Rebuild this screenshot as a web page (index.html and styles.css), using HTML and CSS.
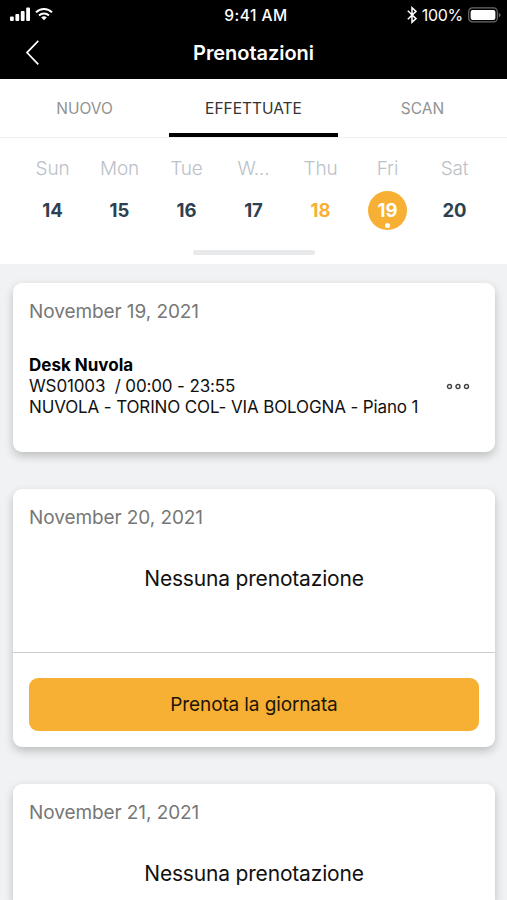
FILE: index.html
```html
<!DOCTYPE html>
<html lang="it">
<head>
<meta charset="utf-8">
<meta name="viewport" content="width=device-width, initial-scale=1">
<title>Prenotazioni</title>
<link rel="stylesheet" href="styles.css">
</head>
<body>
<header class="header">
  <div class="status">
    <div class="status-left">
      <svg width="20" height="14" viewBox="0 0 20 14" fill="#fff"><rect x="0" y="9.500" width="3.800" height="4.500" rx="1"/><rect x="5.400" y="7" width="3.800" height="7" rx="1"/><rect x="10.800" y="4" width="3.800" height="10" rx="1"/><rect x="16.200" y="0.500" width="3.800" height="13.500" rx="1"/></svg>
      <svg width="18" height="14" viewBox="0 0 18 14" fill="none" stroke="#fff" stroke-width="2"><path d="M1 5.400C5.500 1 12.500 1 17 5.400M4 8.500C6.900 5.800 11.100 5.800 14 8.500"/><path d="M6.200 10.400Q9 8 11.800 10.400L9 13.300Z" fill="#fff" stroke="none"/></svg>
    </div>
    <div class="clock">9:41 AM</div>
    <div class="status-right">
      <svg width="10" height="18" viewBox="0 0 10 18" fill="none" stroke="#fff" stroke-width="1.500"><path d="M.800 4.800 9 12.600 5 16.300V1.700L9 5.400.800 13.200"/></svg>
      <span class="percent">100%</span>
      <svg width="34" height="16" viewBox="0 0 34 16"><rect x=".7" y=".9" width="28.600" height="14" rx="3.800" fill="none" stroke="#6b6b6b" stroke-width="1.200"/><rect x="2.600" y="2.900" width="24.800" height="10" rx="2" fill="#fff"/><path d="M30.800 5.700Q32.600 6.400 32.600 8T30.800 10.300Z" fill="#6b6b6b"/></svg>
    </div>
  </div>
  <div class="titlebar">
    <svg class="back" width="16" height="28" viewBox="0 0 16 28" fill="none" stroke="#fff" stroke-width="1.700"><path d="M14.300 1.900 3 13.600 14.300 25.300"/></svg>
    <h1 class="title">Prenotazioni</h1>
  </div>
</header>
<nav class="tabs">
  <div class="tab">NUOVO</div>
  <div class="tab tab-active">EFFETTUATE</div>
  <div class="tab">SCAN</div>
</nav>
<section class="calendar">
  <div class="week">
    <div class="day"><span class="name">Sun</span><span class="num">14</span></div>
    <div class="day"><span class="name">Mon</span><span class="num">15</span></div>
    <div class="day"><span class="name">Tue</span><span class="num">16</span></div>
    <div class="day"><span class="name">W...</span><span class="num">17</span></div>
    <div class="day"><span class="name">Thu</span><span class="num today">18</span></div>
    <div class="day"><span class="name">Fri</span><span class="num selected">19</span></div>
    <div class="day"><span class="name">Sat</span><span class="num">20</span></div>
  </div>
  <div class="knob"></div>
</section>
<main class="list">
  <article class="card card-booked">
    <h2 class="date">November 19, 2021</h2>
    <div class="booking">
      <div class="details">
        <div class="desk">Desk Nuvola</div>
        <div class="slot">WS01003&nbsp; / 00:00 - 23:55</div>
        <div class="place">NUVOLA - TORINO COL- VIA BOLOGNA - Piano 1</div>
      </div>
      <svg class="more" width="24" height="8" viewBox="0 0 24 8" fill="none" stroke="#444" stroke-width="1.400"><circle cx="3.500" cy="3.500" r="2"/><circle cx="12" cy="3.500" r="2"/><circle cx="20.500" cy="3.500" r="2"/></svg>
    </div>
  </article>
  <article class="card card-empty">
    <h2 class="date">November 20, 2021</h2>
    <p class="empty">Nessuna prenotazione</p>
    <div class="actions"><button class="book">Prenota la giornata</button></div>
  </article>
  <article class="card card-last">
    <h2 class="date">November 21, 2021</h2>
    <p class="empty">Nessuna prenotazione</p>
  </article>
</main>
</body>
</html>
```

FILE: styles.css
```css
* { box-sizing: border-box; }
body {
  margin: 0;
  height: 900px;
  overflow: hidden;
  background: #f0f2f3;
  font-family: Inter, "Liberation Sans", sans-serif;
  color: #111;
}
svg { display: block; flex: none; }
h1, h2, p { margin: 0; }
.header { height: 79px; background: #000; color: #fff; }
.status {
  display: grid;
  grid-template-columns: 1fr auto 1fr;
  align-items: center;
  height: 30px;
  padding: 0 5px 0 10px;
}
.status-left { display: flex; gap: 5px; padding-bottom: 2px; }
.clock { font-size: 15.5px; font-weight: 500; letter-spacing: .5px; }
.status-right { display: flex; align-items: center; justify-content: flex-end; gap: 5px; }
.percent { font-size: 16px; letter-spacing: -.3px; }
.titlebar {
  display: grid;
  grid-template-columns: 60px 1fr 60px;
  align-items: center;
  height: 45px;
}
.back { margin-left: 24px; }
.title { text-align: center; font-size: 20px; line-height: 24px; font-weight: 600; letter-spacing: -.05px; }
.tabs {
  display: grid;
  grid-template-columns: repeat(3, 1fr);
  height: 59px;
  background: #fff;
  border-bottom: 1px solid #f1f1f1;
}
.tab {
  text-align: center;
  font-size: 15.5px;
  line-height: 60px;
  height: 58px;
  color: #929292;
}
.tab-active { color: #333; border-bottom: 4px solid #000; }
.calendar {
  display: flex;
  flex-direction: column;
  align-items: center;
  height: 126px;
  padding: 18px 19px 0;
  background: #fff;
}
.week { display: grid; grid-template-columns: repeat(7, 67px); height: 94px; }
.day { display: flex; flex-direction: column; align-items: center; gap: 9px; }
.name { font-size: 19px; line-height: 26px; font-weight: 300; letter-spacing: -.15px; color: #bbc1c8; }
.num {
  position: relative;
  width: 39px;
  height: 39px;
  line-height: 38px;
  border-radius: 50%;
  text-align: center;
  font-size: 18.5px;
  font-weight: 650;
  color: #2d4150;
}
.today { color: #f7b033; }
.selected { background: #f7b033; color: #fff; }
.selected::after {
  content: "";
  position: absolute;
  left: 17px;
  bottom: 2px;
  width: 5px;
  height: 5px;
  border-radius: 50%;
  background: #fff;
}
.knob { width: 122px; height: 5px; border-radius: 3px; background: #e8e9ea; }
.list { display: flex; flex-direction: column; gap: 37px; height: 636px; padding: 19px 12px 0 13px; }
.card {
  flex: none;
  border-radius: 9px;
  background: #fff;
  box-shadow: 0 4px 10px rgba(0, 0, 0, .22);
}
.card-booked { height: 169px; padding: 16px; }
.card-empty { height: 258px; padding-top: 16px; }
.card-last { flex: 1; padding-top: 16px; border-radius: 9px 9px 0 0; }
.date { font-size: 19px; line-height: 25px; font-weight: 400; letter-spacing: -.08px; color: #777; }
.card-empty .date, .card-last .date { margin-left: 16px; }
.booking { display: flex; align-items: center; justify-content: space-between; margin-top: 31px; padding-right: 9px; }
.details { font-size: 17px; line-height: 21px; letter-spacing: -.13px; white-space: nowrap; }
.desk { font-weight: 650; letter-spacing: 0; color: #000; }
.empty { margin-top: 35px; text-align: center; font-size: 21px; line-height: 28px; letter-spacing: -.18px; }
.actions { margin-top: 59px; padding: 25px 16px 16px; border-top: 1px solid #ccc; }
.book {
  display: block;
  width: 100%;
  height: 53px;
  border: 0;
  border-radius: 9px;
  background: #f7b033;
  color: #1c1507;
  font: 400 19px Inter, "Liberation Sans", sans-serif;
  letter-spacing: -.12px;
}
```
